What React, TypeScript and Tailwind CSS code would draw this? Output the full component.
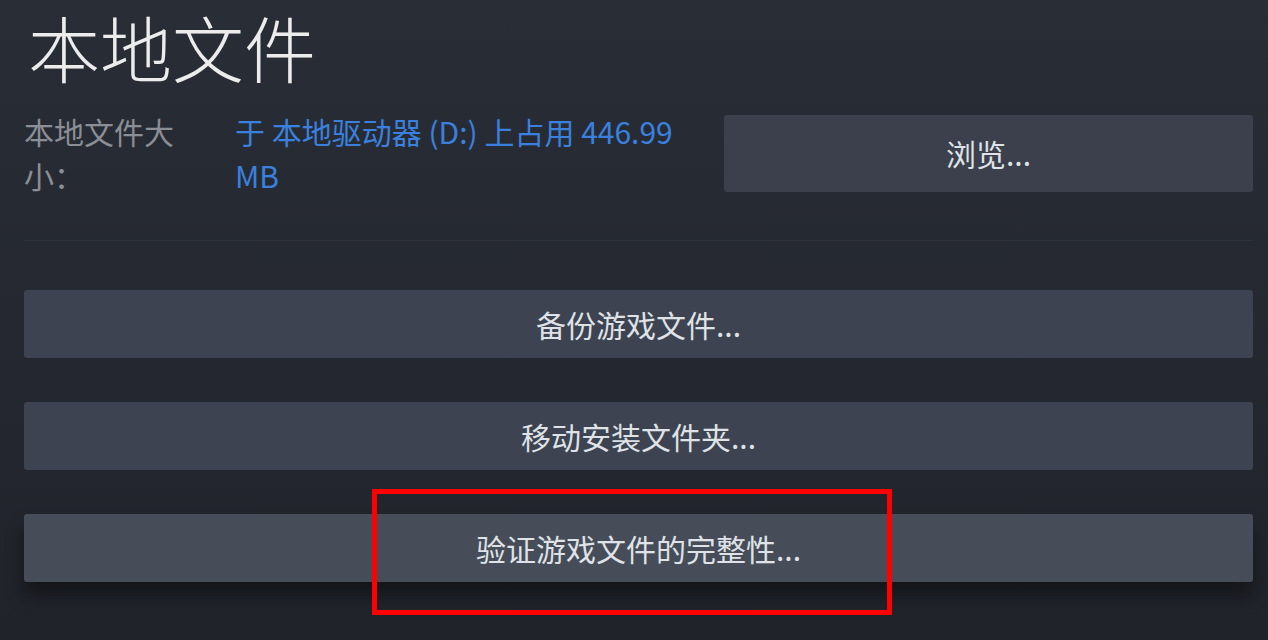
const cjk = { fontFamily: '"Noto Sans CJK SC", "Noto Sans", sans-serif' };

const ActionButton = ({ label, active = false }: { label: string; active?: boolean }) => (
  <button
    className={`h-[68px] w-full rounded-[3px] text-[30px] text-[#dfe2e6] ${
      active ? 'bg-[#464c58] shadow-[0_14px_18px_rgba(0,0,0,0.4)]' : 'bg-[#3d4350]'
    }`}
  >
    {label}
  </button>
);

export default function App() {
  return (
    <div
      className="relative h-[640px] w-[1268px] bg-gradient-to-b from-[#292d36] to-[#20232a] px-6 pr-[15px]"
      style={cjk}
    >
      {/* Title */}
      <h1 className="pt-[2px] pl-1 text-[72px] font-light leading-[88px] text-[#ececec]">本地文件</h1>

      {/* Size row */}
      <div className="mt-[19px] flex items-center">
        <div className="w-[170px] text-[30px] leading-[44px] text-[#8a8e95]">本地文件大小：</div>
        <div className="ml-[41px] w-[472px] text-[30px] leading-[44px] text-[#3a80de]">
          于 本地驱动器 (D:) 上占用 446.99 MB
        </div>
        <button className="ml-auto h-[77px] w-[529px] rounded-[3px] bg-[#3b404c] text-[30px] text-[#dfe2e6]">
          浏览...
        </button>
      </div>

      {/* Divider */}
      <div className="mt-[43px] h-px bg-[#2e323b]" />

      {/* Actions */}
      <div className="mt-[49px] flex flex-col gap-[44px]">
        <ActionButton label="备份游戏文件..." />
        <ActionButton label="移动安装文件夹..." />
        <ActionButton label="验证游戏文件的完整性..." active />
      </div>

      {/* Highlight annotation */}
      <div className="absolute left-[372px] top-[489px] h-[126px] w-[520px] border-[5px] border-[#ff0000]" />
    </div>
  );
}
